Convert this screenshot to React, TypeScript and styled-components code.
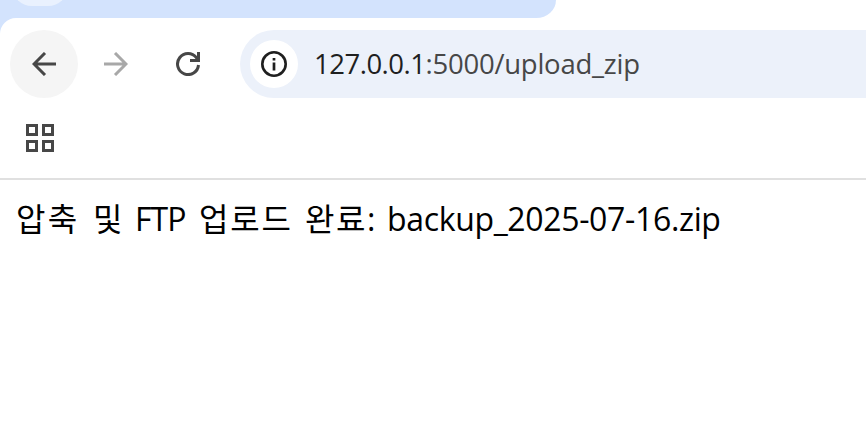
import React from "react";
import styled, { createGlobalStyle } from "styled-components";

const GlobalStyle = createGlobalStyle`
  *, *::before, *::after { box-sizing: border-box; }
  html, body { margin: 0; background: #fff; overflow: hidden; }
`;

const Window = styled.div`
  width: 100%;
  height: 432px;
  overflow: hidden;
  background: #fff;
  font-family: "Open Sans", "Noto Sans CJK KR", sans-serif;
`;

const TabStrip = styled.div`
  display: flex;
  align-items: flex-end;
  width: 556px;
  height: 18px;
  padding: 0 0 12px 12px;
  overflow: hidden;
  background: #d3e3fd;
  border-bottom-right-radius: 24px 22px;
`;

const TabSearchButton = styled.div`
  flex: none;
  width: 56px;
  height: 56px;
  background: #e9f1fe;
  border-radius: 20px;
`;

const ToolbarBackdrop = styled.div`
  background: linear-gradient(#d3e3fd, #d3e3fd) 0 0 / 20px 20px no-repeat;
`;

const Toolbar = styled.header`
  display: flex;
  align-items: center;
  height: 92px;
  padding-left: 10px;
  background: #fff;
  border-top-left-radius: 16px;
`;

const NavButton = styled.button<{ $active?: boolean }>`
  display: flex;
  align-items: center;
  justify-content: center;
  flex: none;
  width: 68px;
  height: 68px;
  margin: 0 4px 0 0;
  padding: 0;
  border: 0;
  border-radius: 50%;
  background: ${(p) => (p.$active ? "#f5f5f5" : "transparent")};
`;

const AddressBar = styled.div`
  display: flex;
  align-items: center;
  flex: 1;
  height: 68px;
  margin-left: 14px;
  padding-left: 10px;
  background: #ecf1fa;
  border-radius: 34px 0 0 34px;
`;

const SiteInfo = styled.span`
  display: flex;
  align-items: center;
  justify-content: center;
  width: 48px;
  height: 48px;
  margin-right: 16px;
  border-radius: 50%;
  background: #fff;
`;

const Url = styled.span`
  font-size: 27.5px;
  line-height: 36px;
  white-space: nowrap;
  color: #474747;
  letter-spacing: -0.25px;
`;

const Host = styled.span`
  color: #1f1f1f;
  letter-spacing: -0.5px;
`;

const BookmarksBar = styled.div`
  display: flex;
  height: 70px;
  padding: 14px 0 0 26px;
  border-bottom: 2px solid #e0e0e0;
`;

const Message = styled.main`
  display: flex;
  padding: 17px 0 0 16px;
  font-size: 32px;
  line-height: 44px;
  color: #000;
  white-space: pre;
`;

const Word = styled.span<{ $width: number; $spacing?: number }>`
  flex: none;
  width: ${(p) => p.$width}px;
  letter-spacing: ${(p) => p.$spacing ?? 0}px;
`;

const words = [
  { text: "압축", width: 77, spacing: 2.2 },
  { text: "및", width: 42 },
  { text: "FTP", width: 64, spacing: -0.9 },
  { text: "업로드", width: 106, spacing: 1.8 },
  { text: "완료:", width: 82, spacing: 1.5 },
  { text: "backup_2025-07-16.zip", width: 340, spacing: -0.34 },
];

const Arrow = ({ color, flip }: { color: string; flip?: boolean }) => (
  <svg width="24" height="24" viewBox="0 0 24 24" fill="none" stroke={color} strokeWidth="3">
    <path d={flip ? "M0 12H22M11 1L22 12L11 23" : "M24 12H2M13 1L2 12L13 23"} />
  </svg>
);

export default function App() {
  return (
    <Window>
      <GlobalStyle />
      <TabStrip>
        <TabSearchButton />
      </TabStrip>
      <ToolbarBackdrop>
        <Toolbar>
          <NavButton $active aria-label="뒤로">
            <Arrow color="#474747" />
          </NavButton>
          <NavButton aria-label="앞으로">
            <Arrow color="#a8a8a8" flip />
          </NavButton>
          <NavButton aria-label="새로고침">
            <svg width="24" height="24" viewBox="0 0 24 24" fill="none" stroke="#474747" strokeWidth="3">
              <path d="M22.5 13A10.5 10.5 0 1 1 20.4 5.7L22 7.5" />
              <path d="M22.5 0V8.5H14" />
            </svg>
          </NavButton>
          <AddressBar>
            <SiteInfo>
              <svg width="26" height="26" viewBox="0 0 26 26" fill="none" stroke="#1f1f1f">
                <circle cx="13" cy="13" r="11.7" strokeWidth="2.6" />
                <path d="M13 11.5V19.5M13 7V9.6" strokeWidth="2.7" />
              </svg>
            </SiteInfo>
            <Url>
              <Host>127.0.0.1</Host>:5000/upload_zip
            </Url>
          </AddressBar>
        </Toolbar>
      </ToolbarBackdrop>
      <BookmarksBar>
        <svg width="28" height="28" viewBox="0 0 28 28" fill="none" stroke="#474747" strokeWidth="3">
          <path d="M1.5 1.5h9v9h-9zM17.5 1.5h9v9h-9zM1.5 17.5h9v9h-9zM17.5 17.5h9v9h-9z" />
        </svg>
      </BookmarksBar>
      <Message>
        {words.map((word) => (
          <Word key={word.text} $width={word.width} $spacing={word.spacing}>
            {word.text}
          </Word>
        ))}
      </Message>
    </Window>
  );
}
